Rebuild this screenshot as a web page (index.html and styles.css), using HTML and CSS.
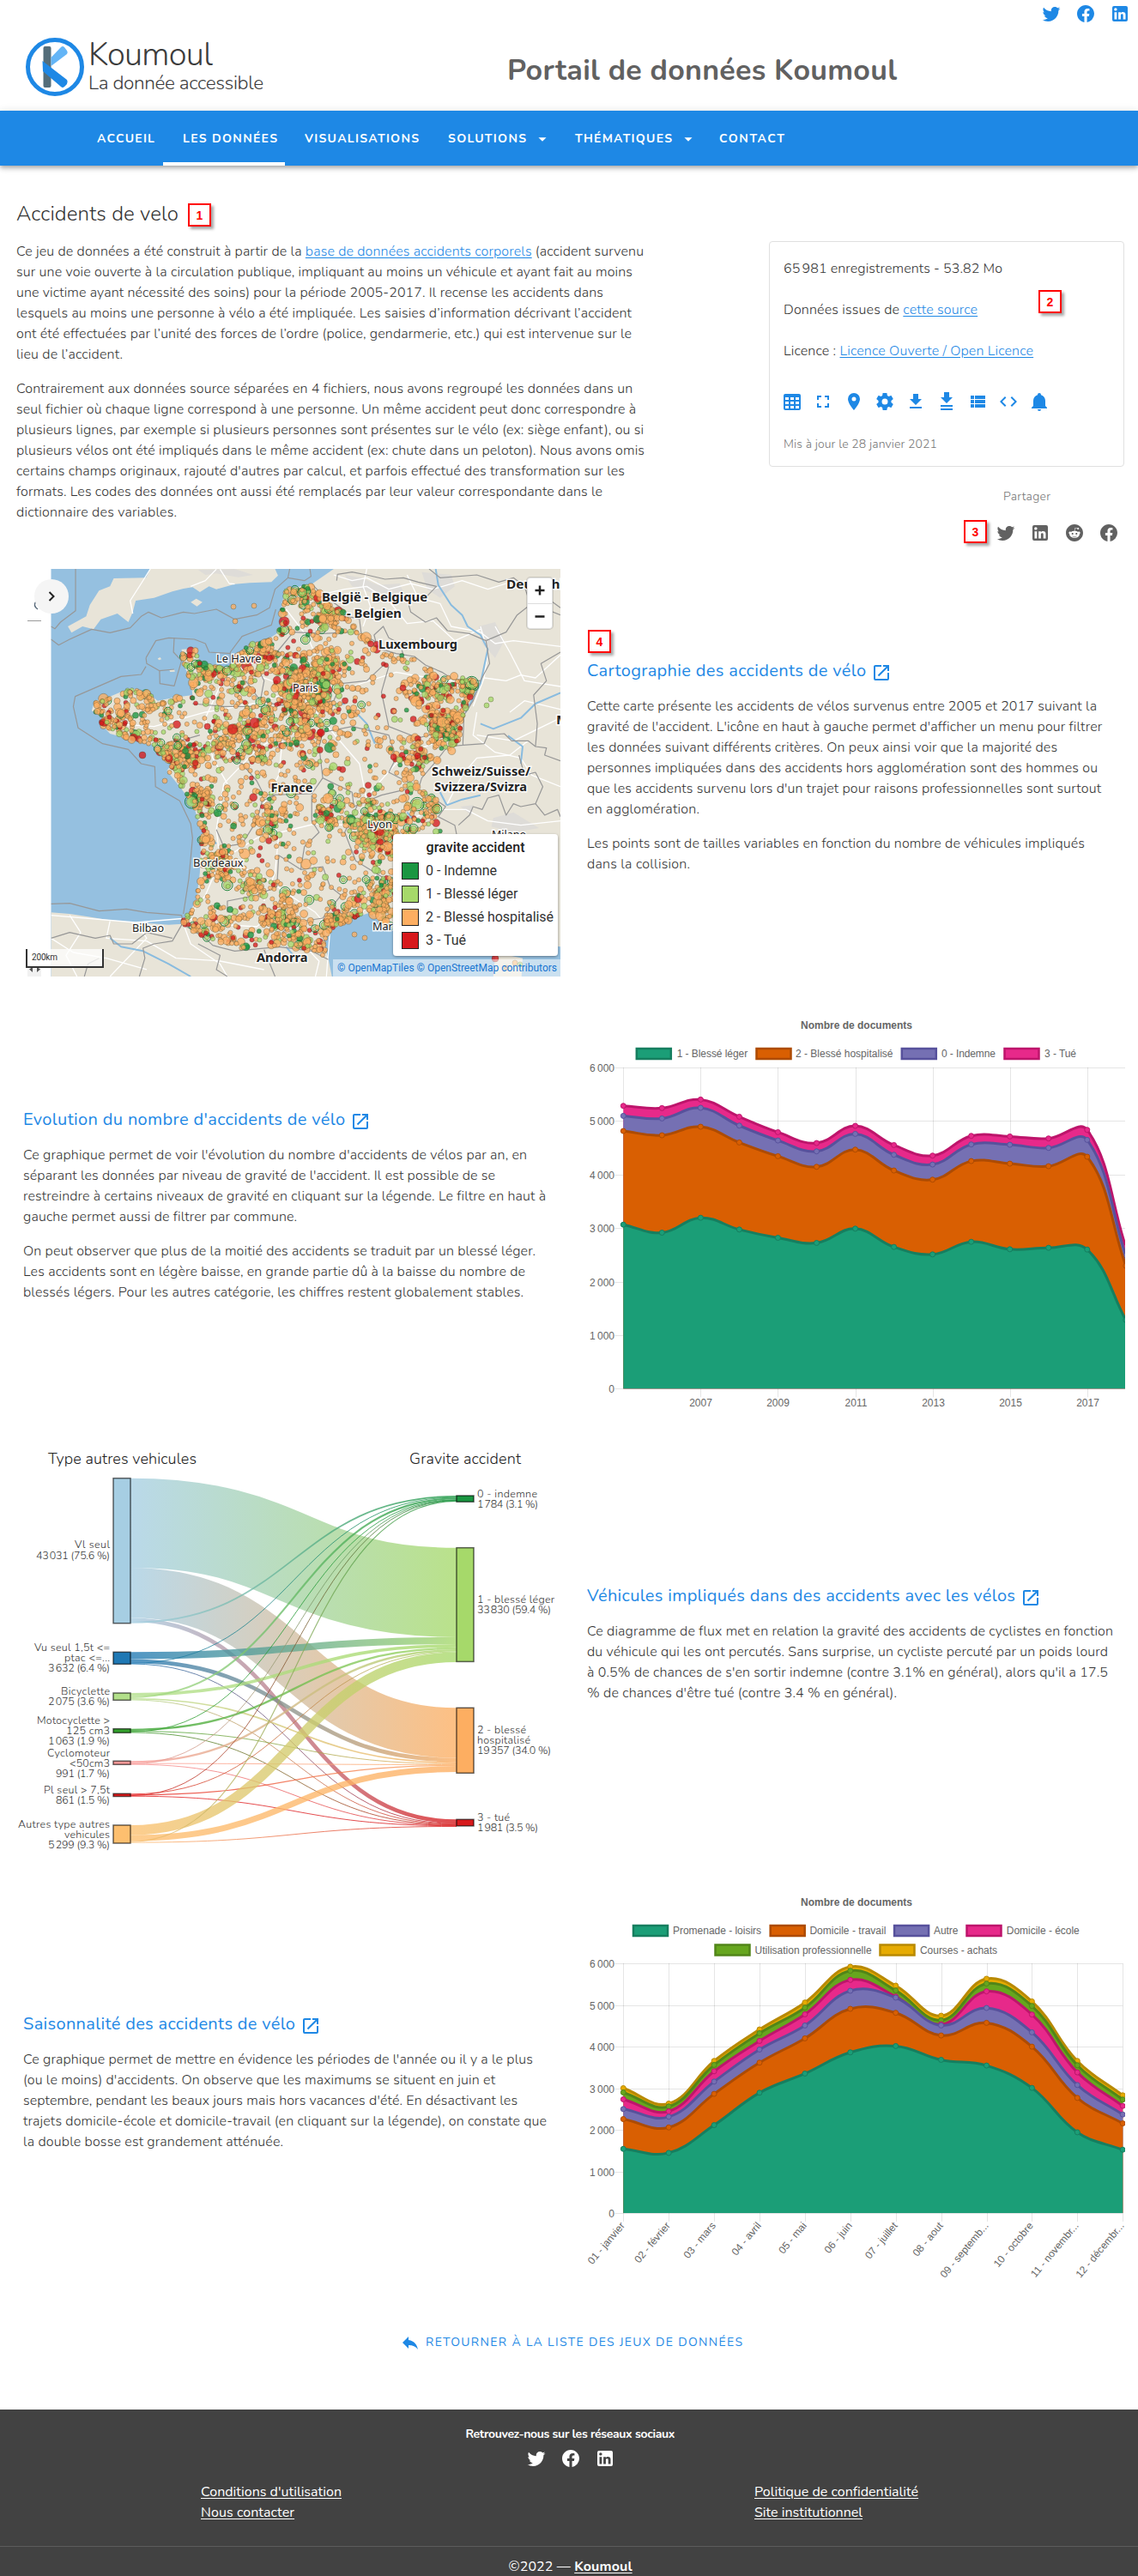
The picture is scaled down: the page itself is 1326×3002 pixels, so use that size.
FILE: index.html
```html
<!DOCTYPE html>
<html lang="fr">
<head>
<meta charset="utf-8">
<title>Accidents de velo - Koumoul</title>
<link rel="stylesheet" href="styles.css">
</head>
<body>
<svg class="sprite" aria-hidden="true">
  <symbol id="i-twitter" viewBox="0 0 24 24"><path d="M22.46,6C21.69,6.35 20.86,6.58 20,6.69C20.88,6.16 21.56,5.32 21.88,4.31C21.05,4.81 20.13,5.16 19.16,5.36C18.37,4.5 17.26,4 16,4C13.65,4 11.73,5.92 11.73,8.29C11.73,8.63 11.77,8.96 11.84,9.27C8.28,9.09 5.11,7.38 3,4.79C2.63,5.42 2.42,6.16 2.42,6.94C2.42,8.43 3.17,9.75 4.33,10.5C3.62,10.5 2.96,10.3 2.38,10V10.03C2.38,12.11 3.86,13.85 5.82,14.24C5.46,14.34 5.08,14.39 4.69,14.39C4.42,14.39 4.15,14.36 3.89,14.31C4.43,16 6,17.26 7.89,17.29C6.43,18.45 4.58,19.13 2.56,19.13C2.22,19.13 1.88,19.11 1.54,19.07C3.44,20.29 5.7,21 8.12,21C16,21 20.33,14.46 20.33,8.79C20.33,8.6 20.33,8.42 20.32,8.23C21.16,7.63 21.88,6.87 22.46,6Z"/></symbol>
  <symbol id="i-facebook" viewBox="0 0 24 24"><path d="M12 2.04C6.5 2.04 2 6.53 2 12.06C2 17.06 5.66 21.21 10.44 21.96V14.96H7.9V12.06H10.44V9.85C10.44 7.34 11.93 5.96 14.22 5.96C15.31 5.96 16.45 6.15 16.45 6.15V8.62H15.19C13.95 8.62 13.56 9.39 13.56 10.18V12.06H16.34L15.89 14.96H13.56V21.96A10 10 0 0 0 22 12.06C22 6.53 17.5 2.04 12 2.04Z"/></symbol>
  <symbol id="i-linkedin" viewBox="0 0 24 24"><path d="M19 3A2 2 0 0 1 21 5V19A2 2 0 0 1 19 21H5A2 2 0 0 1 3 19V5A2 2 0 0 1 5 3H19M18.5 18.5V13.2A3.26 3.26 0 0 0 15.24 9.94C14.39 9.94 13.4 10.46 12.92 11.24V10.13H10.13V18.5H12.92V13.57C12.92 12.8 13.54 12.17 14.31 12.17A1.4 1.4 0 0 1 15.71 13.57V18.5H18.5M6.88 8.56A1.68 1.68 0 0 0 8.56 6.88C8.56 5.95 7.81 5.19 6.88 5.19A1.69 1.69 0 0 0 5.19 6.88C5.19 7.81 5.95 8.56 6.88 8.56M8.27 18.5V10.13H5.5V18.5H8.27Z"/></symbol>
  <symbol id="i-reddit" viewBox="0 0 24 24"><path d="M14.5 15.41C14.58 15.5 14.58 15.69 14.5 15.8C13.77 16.5 12.41 16.56 12 16.56C11.61 16.56 10.25 16.5 9.54 15.8C9.44 15.69 9.44 15.5 9.54 15.41C9.65 15.31 9.82 15.31 9.92 15.41C10.38 15.87 11.33 16 12 16C12.69 16 13.66 15.87 14.1 15.41C14.21 15.31 14.38 15.31 14.5 15.41M10.75 13.04C10.75 12.47 10.28 12 9.71 12C9.14 12 8.67 12.47 8.67 13.04C8.67 13.61 9.14 14.09 9.71 14.08C10.28 14.08 10.75 13.61 10.75 13.04M14.29 12C13.72 12 13.25 12.5 13.25 13.05C13.25 13.61 13.72 14.09 14.29 14.09C14.86 14.09 15.33 13.61 15.33 13.05C15.33 12.5 14.86 12 14.29 12M22 12C22 17.5 17.5 22 12 22S2 17.5 2 12C2 6.5 6.5 2 12 2S22 6.5 22 12M18.67 12C18.67 11.19 18 10.54 17.22 10.54C16.82 10.54 16.46 10.7 16.2 10.95C15.2 10.23 13.83 9.77 12.3 9.71L12.97 6.58L15.14 7.05C15.16 7.6 15.62 8.04 16.18 8.04C16.75 8.04 17.22 7.57 17.22 7C17.22 6.43 16.75 5.96 16.18 5.96C15.77 5.96 15.41 6.2 15.25 6.55L12.82 6.03C12.75 6 12.68 6.03 12.63 6.07C12.57 6.11 12.54 6.17 12.53 6.24L11.79 9.72C10.24 9.77 8.84 10.23 7.82 10.96C7.56 10.71 7.2 10.56 6.81 10.56C6 10.56 5.35 11.21 5.35 12C5.35 12.61 5.71 13.11 6.21 13.34C6.19 13.5 6.18 13.62 6.18 13.78C6.18 16 8.79 17.85 12 17.85C15.23 17.85 17.85 16.03 17.85 13.78C17.85 13.64 17.84 13.5 17.81 13.34C18.31 13.11 18.67 12.6 18.67 12Z"/></symbol>
  <symbol id="i-table" viewBox="0 0 24 24"><path d="M4,3H20A2,2 0 0,1 22,5V20A2,2 0 0,1 20,22H4A2,2 0 0,1 2,20V5A2,2 0 0,1 4,3M4,7V10H8V7H4M10,7V10H14V7H10M20,10V7H16V10H20M4,12V15H8V12H4M4,20H8V17H4V20M10,12V15H14V12H10M10,20H14V17H10V20M20,20V17H16V20H20M20,12H16V15H20V12Z"/></symbol>
  <symbol id="i-fullscreen" viewBox="0 0 24 24"><path d="M5,5H10V7H7V10H5V5M14,5H19V10H17V7H14V5M17,14H19V19H14V17H17V14M10,17V19H5V14H7V17H10Z"/></symbol>
  <symbol id="i-marker" viewBox="0 0 24 24"><path d="M12,11.5A2.5,2.5 0 0,1 9.5,9A2.5,2.5 0 0,1 12,6.5A2.5,2.5 0 0,1 14.5,9A2.5,2.5 0 0,1 12,11.5M12,2A7,7 0 0,0 5,9C5,14.25 12,22 12,22C12,22 19,14.25 19,9A7,7 0 0,0 12,2Z"/></symbol>
  <symbol id="i-cog" viewBox="0 0 24 24"><path d="M12,15.5A3.5,3.5 0 0,1 8.5,12A3.5,3.5 0 0,1 12,8.5A3.5,3.5 0 0,1 15.5,12A3.5,3.5 0 0,1 12,15.5M19.43,12.97C19.47,12.65 19.5,12.33 19.5,12C19.5,11.67 19.47,11.34 19.43,11L21.54,9.37C21.73,9.22 21.78,8.95 21.66,8.73L19.66,5.27C19.54,5.05 19.27,4.96 19.05,5.05L16.56,6.05C16.04,5.66 15.5,5.32 14.87,5.07L14.5,2.42C14.46,2.18 14.25,2 14,2H10C9.75,2 9.54,2.18 9.5,2.42L9.13,5.07C8.5,5.32 7.96,5.66 7.44,6.05L4.95,5.05C4.73,4.96 4.46,5.05 4.34,5.27L2.34,8.73C2.21,8.95 2.27,9.22 2.46,9.37L4.57,11C4.53,11.34 4.5,11.67 4.5,12C4.5,12.33 4.53,12.65 4.57,12.97L2.46,14.63C2.27,14.78 2.21,15.05 2.34,15.27L4.34,18.73C4.46,18.95 4.73,19.03 4.95,18.95L7.44,17.94C7.96,18.34 8.5,18.68 9.13,18.93L9.5,21.58C9.54,21.82 9.75,22 10,22H14C14.25,22 14.46,21.82 14.5,21.58L14.87,18.93C15.5,18.67 16.04,18.34 16.56,17.94L19.05,18.95C19.27,19.03 19.54,18.95 19.66,18.73L21.66,15.27C21.78,15.05 21.73,14.78 21.54,14.63L19.43,12.97Z"/></symbol>
  <symbol id="i-download" viewBox="0 0 24 24"><path d="M5,20H19V18H5M19,9H15V3H9V9H5L12,16L19,9Z"/></symbol>
  <symbol id="i-download-multi" viewBox="0 0 24 24"><path d="M9,1V7H5L12,14L19,7H15V1H9M5,16V18H19V16H5M5,20V22H19V20H5Z"/></symbol>
  <symbol id="i-list" viewBox="0 0 24 24"><path d="M9,5V9H21V5M9,19H21V15H9M9,14H21V10H9M4,9H8V5H4M4,19H8V15H4M4,14H8V10H4V14Z"/></symbol>
  <symbol id="i-code" viewBox="0 0 24 24"><path d="M14.6,16.6L19.2,12L14.6,7.4L16,6L22,12L16,18L14.6,16.6M9.4,16.6L4.8,12L9.4,7.4L8,6L2,12L8,18L9.4,16.6Z"/></symbol>
  <symbol id="i-bell" viewBox="0 0 24 24"><path d="M21,19V20H3V19L5,17V11C5,7.9 7.03,5.17 10,4.29C10,4.19 10,4.1 10,4A2,2 0 0,1 12,2A2,2 0 0,1 14,4C14,4.1 14,4.19 14,4.29C16.97,5.17 19,7.9 19,11V17L21,19M14,21A2,2 0 0,1 12,23A2,2 0 0,1 10,21"/></symbol>
  <symbol id="i-open" viewBox="0 0 24 24"><path d="M14,3V5H17.59L7.76,14.83L9.17,16.24L19,6.41V10H21V3M19,19H5V5H12V3H5C3.89,3 3,3.9 3,5V19A2,2 0 0,0 5,21H19A2,2 0 0,0 21,19V12H19V19Z"/></symbol>
  <symbol id="i-reply" viewBox="0 0 24 24"><path d="M10,9V5L3,12L10,19V14.9C15,14.9 18.5,16.5 21,20C20,15 17,10 10,9Z"/></symbol>
  <symbol id="i-down" viewBox="0 0 24 24"><path d="M7,10L12,15L17,10H7Z"/></symbol>
</svg>

<header class="header">
  <div class="brand">
    <svg class="brand-mark" width="70" height="70" viewBox="0 0 70 70">
      <circle cx="35" cy="35" r="31.5" fill="#fff" stroke="#1e88e5" stroke-width="5"/>
      <rect x="21.500" y="11" width="9" height="48" rx="2" fill="#546e7a"/>
      <path d="M30.500 24 L42 12 Q44 10 46 12 L49 16 Q50.500 18 49 20 L30.500 34Z" fill="#64b5f6"/>
      <path d="M20.500 28 L49 50 Q50.500 52 49 55 L46 58 Q44 60 42 58 L21 40Z" fill="#1e88e5"/>
    </svg>
    <div class="brand-text">
      <div class="brand-name"><span data-fit="145">Koumoul</span></div>
      <div class="brand-tag"><span data-fit="204">La donnée accessible</span></div>
    </div>
  </div>
  <h1 class="site-title"><span data-fit="454">Portail de données Koumoul</span></h1>
  <div class="social social-top">
    <svg class="icon"><use href="#i-twitter"/></svg>
    <svg class="icon"><use href="#i-facebook"/></svg>
    <svg class="icon"><use href="#i-linkedin"/></svg>
  </div>
</header>

<nav class="nav">
  <a class="nav-item nav-home"><span data-fit="67">ACCUEIL</span></a>
  <a class="nav-item nav-data"><span data-fit="110">LES DONNÉES</span></a>
  <a class="nav-item nav-visu"><span data-fit="133">VISUALISATIONS</span></a>
  <a class="nav-item nav-solutions"><span data-fit="91">SOLUTIONS</span><svg class="caret"><use href="#i-down"/></svg></a>
  <a class="nav-item nav-themes"><span data-fit="113">THÉMATIQUES</span><svg class="caret"><use href="#i-down"/></svg></a>
  <a class="nav-item"><span data-fit="76">CONTACT</span></a>
</nav>

<main>
  <section class="intro">
    <div class="intro-text">
      <h2 class="page-title"><span data-fit="189">Accidents de velo</span><b class="badge">1</b></h2>
      <p>
        <span class="line"><span data-fit="731">Ce jeu de données a été construit à partir de la <a>base de données accidents corporels</a> (accident survenu</span></span>
        <span class="line"><span data-fit="718">sur une voie ouverte à la circulation publique, impliquant au moins un véhicule et ayant fait au moins</span></span>
        <span class="line"><span data-fit="684">une victime ayant nécessité des soins) pour la période 2005-2017. Il recense les accidents dans</span></span>
        <span class="line"><span data-fit="717">lesquels au moins une personne à vélo a été impliquée. Les saisies d’information décrivant l’accident</span></span>
        <span class="line"><span data-fit="717">ont été effectuées par l’unité des forces de l’ordre (police, gendarmerie, etc.) qui est intervenue sur le</span></span>
        <span class="line"><span data-fit="124">lieu de l’accident.</span></span>
      </p>
      <p>
        <span class="line"><span data-fit="718">Contrairement aux données source séparées en 4 fichiers, nous avons regroupé les données dans un</span></span>
        <span class="line"><span data-fit="722">seul fichier où chaque ligne correspond à une personne. Un même accident peut donc correspondre à</span></span>
        <span class="line"><span data-fit="731">plusieurs lignes, par exemple si plusieurs personnes sont présentes sur le vélo (ex: siège enfant), ou si</span></span>
        <span class="line"><span data-fit="732">plusieurs vélos ont été impliqués dans le même accident (ex: chute dans un peloton). Nous avons omis</span></span>
        <span class="line"><span data-fit="709">certains champs originaux, rajouté d'autres par calcul, et parfois effectué des transformation sur les</span></span>
        <span class="line"><span data-fit="683">formats. Les codes des données ont aussi été remplacés par leur valeur correspondante dans le</span></span>
        <span class="line"><span data-fit="187">dictionnaire des variables.</span></span>
      </p>
    </div>
    <aside class="side">
      <div class="card">
        <div class="card-row"><span data-fit="255">65&#8239;981 enregistrements - 53.82 Mo</span></div>
        <div class="card-row"><span data-fit="226">Données issues de <a>cette source</a></span><b class="badge badge-source">2</b></div>
        <div class="card-row"><span data-fit="291">Licence : <a>Licence Ouverte / Open Licence</a></span></div>
        <div class="actions">
          <svg class="icon"><use href="#i-table"/></svg>
          <svg class="icon"><use href="#i-fullscreen"/></svg>
          <svg class="icon"><use href="#i-marker"/></svg>
          <svg class="icon"><use href="#i-cog"/></svg>
          <svg class="icon"><use href="#i-download"/></svg>
          <svg class="icon"><use href="#i-download-multi"/></svg>
          <svg class="icon"><use href="#i-list"/></svg>
          <svg class="icon"><use href="#i-code"/></svg>
          <svg class="icon"><use href="#i-bell"/></svg>
        </div>
        <div class="updated"><span data-fit="179">Mis à jour le 28 janvier 2021</span></div>
      </div>
      <div class="share-label"><span data-fit="55">Partager</span></div>
      <div class="share">
        <b class="badge">3</b>
        <div class="social social-share">
          <svg class="icon"><use href="#i-twitter"/></svg>
          <svg class="icon"><use href="#i-linkedin"/></svg>
          <svg class="icon"><use href="#i-reddit"/></svg>
          <svg class="icon"><use href="#i-facebook"/></svg>
        </div>
      </div>
    </aside>
  </section>

  <section class="row">
    <svg class="figure" id="map" width="625" height="475" viewBox="28 663 625 475"></svg>
    <div class="story story-map">
      <b class="badge badge-map">4</b>
      <h3><span data-fit="325">Cartographie des accidents de vélo</span><svg class="icon"><use href="#i-open"/></svg></h3>
      <p>
        <span class="line"><span data-fit="594">Cette carte présente les accidents de vélos survenus entre 2005 et 2017 suivant la</span></span>
        <span class="line"><span data-fit="600">gravité de l'accident. L'icône en haut à gauche permet d'afficher un menu pour filtrer</span></span>
        <span class="line"><span data-fit="548">les données suivant différents critères. On peux ainsi voir que la majorité des</span></span>
        <span class="line"><span data-fit="595">personnes impliquées dans des accidents hors agglomération sont des hommes ou</span></span>
        <span class="line"><span data-fit="599">que les accidents survenu lors d'un trajet pour raisons professionnelles sont surtout</span></span>
        <span class="line"><span data-fit="131">en agglomération.</span></span>
      </p>
      <p>
        <span class="line"><span data-fit="580">Les points sont de tailles variables en fonction du nombre de véhicules impliqués</span></span>
        <span class="line"><span data-fit="120">dans la collision.</span></span>
      </p>
    </div>
  </section>

  <section class="row">
    <div class="story story-years">
      <h3><span data-fit="375">Evolution du nombre d'accidents de vélo</span><svg class="icon"><use href="#i-open"/></svg></h3>
      <p>
        <span class="line"><span data-fit="587">Ce graphique permet de voir l'évolution du nombre d'accidents de vélos par an, en</span></span>
        <span class="line"><span data-fit="550">séparant les données par niveau de gravité de l'accident. Il est possible de se</span></span>
        <span class="line"><span data-fit="609">restreindre à certains niveaux de gravité en cliquant sur la légende. Le filtre en haut à</span></span>
        <span class="line"><span data-fit="319">gauche permet aussi de filtrer par commune.</span></span>
      </p>
      <p>
        <span class="line"><span data-fit="597">On peut observer que plus de la moitié des accidents se traduit par un blessé léger.</span></span>
        <span class="line"><span data-fit="585">Les accidents sont en légère baisse, en grande partie dû à la baisse du nombre de</span></span>
        <span class="line"><span data-fit="583">blessés légers. Pour les autres catégorie, les chiffres restent globalement stables.</span></span>
      </p>
    </div>
    <svg class="figure chart" id="years" width="626" height="475" viewBox="685 1174 626 475"></svg>
  </section>

  <section class="row">
    <svg class="figure sankey" id="flows" width="625" height="475" viewBox="28 1685 625 475"></svg>
    <div class="story story-flows">
      <h3><span data-fit="499">Véhicules impliqués dans des accidents avec les vélos</span><svg class="icon"><use href="#i-open"/></svg></h3>
      <p>
        <span class="line"><span data-fit="613">Ce diagramme de flux met en relation la gravité des accidents de cyclistes en fonction</span></span>
        <span class="line"><span data-fit="607">du véhicule qui les ont percutés. Sans surprise, un cycliste percuté par un poids lourd</span></span>
        <span class="line"><span data-fit="607">à 0.5% de chances de s'en sortir indemne (contre 3.1% en général), alors qu'il a 17.5</span></span>
        <span class="line"><span data-fit="361">% de chances d'être tué (contre 3.4 % en général).</span></span>
      </p>
    </div>
  </section>

  <section class="row">
    <div class="story story-months">
      <h3><span data-fit="317">Saisonnalité des accidents de vélo</span><svg class="icon"><use href="#i-open"/></svg></h3>
      <p>
        <span class="line"><span data-fit="594">Ce graphique permet de mettre en évidence les périodes de l'année ou il y a le plus</span></span>
        <span class="line"><span data-fit="550">(ou le moins) d'accidents. On observe que les maximums se situent en juin et</span></span>
        <span class="line"><span data-fit="576">septembre, pendant les beaux jours mais hors vacances d'été. En désactivant les</span></span>
        <span class="line"><span data-fit="610">trajets domicile-école et domicile-travail (en cliquant sur la légende), on constate que</span></span>
        <span class="line"><span data-fit="303">la double bosse est grandement atténuée.</span></span>
      </p>
    </div>
    <svg class="figure chart" id="months" width="626" height="475" viewBox="685 2196 626 475"></svg>
  </section>

  <a class="back"><svg class="icon"><use href="#i-reply"/></svg><span data-fit="369">RETOURNER À LA LISTE DES JEUX DE DONNÉES</span></a>
</main>

<footer class="footer">
  <div class="footer-title"><span data-fit="244">Retrouvez-nous sur les réseaux sociaux</span></div>
  <div class="social">
    <svg class="icon"><use href="#i-twitter"/></svg>
    <svg class="icon"><use href="#i-facebook"/></svg>
    <svg class="icon"><use href="#i-linkedin"/></svg>
  </div>
  <div class="footer-links">
    <div><a data-fit="164">Conditions d'utilisation</a><a data-fit="109">Nous contacter</a></div>
    <div><a data-fit="191">Politique de confidentialité</a><a data-fit="126">Site institutionnel</a></div>
  </div>
  <div class="copyright"><span data-fit="144">©2022 — <a>Koumoul</a></span></div>
</footer>
<script src="main.js"></script>
</body>
</html>
```
FILE: styles.css
```css
* { box-sizing: border-box; }
body {
  margin: 0;
  background: #fff;
  color: #333;
  font-family: Nunito, Lato, sans-serif;
  font-size: 16px;
  font-weight: 300;
  line-height: 24px;
}
h1, h2, h3, p { margin: 0; font-weight: 300; }
a { color: #1e88e5; text-decoration: underline; text-underline-offset: 2px; }
.sprite { position: absolute; width: 0; height: 0; }
.icon { width: 24px; height: 24px; fill: currentColor; display: block; flex: none; }
[data-fit] { white-space: nowrap; display: inline-block; }
.line { display: block; height: 24px; }

.badge {
  display: block;
  flex: none;
  width: 27px;
  height: 27px;
  border: 2px solid #f00;
  background: #fff;
  box-shadow: 3px 3px 3px rgba(0, 0, 0, .35);
  color: #f00;
  font: bold 14px/24px "Liberation Sans", sans-serif;
  text-align: center;
}

/* header */
.header { display: flex; height: 129px; position: relative; }
.brand { display: flex; padding: 43px 0 0 29px; gap: 4px; width: 591px; }
.brand-text { color: #3c3c3c; padding-top: 3px; }
.brand-name { font-size: 38px; line-height: 36px; height: 37px; }
.brand-tag { font-size: 22.5px; line-height: 28px; height: 28px; }
.site-title { font-size: 34px; font-weight: 700; line-height: 40px; color: #616161; padding-top: 62px; }
.social { display: flex; justify-content: center; gap: 16px; }
.social-top { margin-left: auto; padding: 4px 9px 0 0; color: #1e88e5; }

.nav {
  display: flex;
  height: 64px;
  padding-left: 113px;
  background: #1e88e5;
  box-shadow: 0 2px 4px -1px rgba(0, 0, 0, .2), 0 4px 5px rgba(0, 0, 0, .14), 0 1px 10px rgba(0, 0, 0, .12);
}
.nav-item {
  display: flex;
  align-items: center;
  color: #fff;
  font-weight: 700;
  font-size: 14px;
  text-decoration: none;
  position: relative;
  height: 64px;
  padding-top: 1px;
}
.nav-home { width: 100px; }
.nav-data { width: 142px; }
.nav-data::after { content: ""; position: absolute; left: -23px; bottom: 0; width: 142px; height: 4px; background: #fff; }
.nav-visu { width: 167px; }
.nav-solutions { width: 148px; }
.nav-themes { width: 168px; }
.caret { width: 22px; height: 22px; fill: currentColor; margin-left: 8px; }

/* dataset description */
.intro { display: flex; justify-content: space-between; height: 470px; padding: 40px 16px 0 19px; }
.page-title { display: flex; gap: 11px; font-size: 24px; line-height: 32px; height: 48px; }
.page-title .badge { margin-top: 4px; }
.intro-text p + p { margin-top: 16px; }
.side { width: 414px; padding-top: 48px; }
.card { border: 1px solid #e0e0e0; border-radius: 4px; height: 263px; padding: 15px 16px; }
.card-row { height: 48px; line-height: 32px; position: relative; }
.badge-source { position: absolute; left: 297px; top: -7px; }
.actions { display: flex; gap: 12px; padding-top: 15px; margin-left: -2px; color: #1e88e5; }
.updated { color: #757575; font-size: 14px; padding-top: 28px; line-height: 20px; }
.share-label { color: #757575; font-size: 14px; line-height: 20px; padding: 25px 0 0 273px; }
.share { display: flex; padding: 17px 0 0 227px; gap: 10px; }
.social-share { color: #616161; padding-top: 3px; }

/* visualisation rows */
.row { display: grid; grid-template-columns: 625px 625px; column-gap: 32px; height: 475px; margin: 0 0 36px 28px; }
.figure { display: block; }
.story { position: relative; margin-left: -1px; }
.story h3 { display: flex; gap: 6px; height: 45px; color: #1e88e5; font-size: 20px; font-weight: 400; line-height: 32px; }
.story h3 .icon { margin-top: 6px; }
.story p + p { margin-top: 16px; }
.story-map { padding-top: 103px; }
.story-years { padding-top: 115px; }
.story-flows { padding-top: 159px; }
.story-months { padding-top: 147px; }
.badge-map { position: absolute; left: 1px; top: 71px; }
.chart text { font: 12px "Liberation Sans", Arial, sans-serif; fill: #666; }
.chart .title { font-weight: 700; }
.sankey { overflow: visible; }
.sankey text { font-size: 12.500px; fill: #333; }
.sankey .head { font-size: 18px; fill: #222; }
.map-label { font: 700 15px "Noto Sans", sans-serif; fill: #222; stroke: #fff; stroke-width: 3px; stroke-opacity: .85; paint-order: stroke; }
.map-town { font: 13px "Noto Sans", sans-serif; fill: #222; stroke: #fff; stroke-width: 3px; stroke-opacity: .85; paint-order: stroke; }
.map-ui { font: 16px Roboto, sans-serif; fill: #333; }
.map-ui-title { font: 500 16px Roboto, sans-serif; fill: #222; }
.map-credit { font: 12px Roboto, sans-serif; fill: #1976d2; }
.map-scale { font: 10px Roboto, sans-serif; fill: #333; }

.back { display: flex; gap: 6px; justify-content: flex-start; height: 101px; padding: 11px 0 0 466px; color: #1e88e5; font-size: 14px; font-weight: 400; text-decoration: none; }

/* footer */
.footer { height: 194px; background: #424242; color: #fff; padding: 20px 0 0 3px; font-weight: 400; }
.footer a { color: #fff; }
.footer-title { text-align: center; font-size: 14px; font-weight: 700; line-height: 16px; height: 25px; padding-top: 1px; }
.footer-links { display: grid; grid-template-columns: 645px 1fr; padding: 15px 0 0 231px; height: 90px; }
.footer-links div { display: flex; flex-direction: column; align-items: flex-start; }
.copyright { border-top: 1px solid #5c5c5c; text-align: center; padding: 11px 0 0 3px; margin-left: -3px; }
.copyright a { font-weight: 700; }
```
FILE: main.js
```js
const NS = 'http://www.w3.org/2000/svg';

function add(parent, tag, attrs, text) {
  const el = document.createElementNS(NS, tag);
  for (const k in attrs) el.setAttribute(k, attrs[k]);
  if (text !== undefined) el.textContent = text;
  parent.appendChild(el);
  return el;
}

/* Spread the glyphs of a line over its measure. */
document.querySelectorAll('[data-fit]').forEach(el => {
  const gap = (Number(el.dataset.fit) - el.getBoundingClientRect().width) / (el.textContent.length - 1);
  el.style.letterSpacing = gap.toFixed(3) + 'px';
  el.style.marginRight = (-gap).toFixed(3) + 'px';
});

/* ---------- stacked area charts ---------- */
const SERIES = [
  ['#1b9e77', '#167e5f'], ['#d95f02', '#ad4b02'], ['#7570b3', '#57519c'],
  ['#e7298a', '#bd156b'], ['#66a61e', '#518518'], ['#e6ab02', '#b88902']
];

function smooth(pts, top, bottom) {
  const cp = pts.map((p, i) => {
    const a = pts[i - 1] || p, b = pts[i + 1] || p;
    const d1 = Math.hypot(p[0] - a[0], p[1] - a[1]), d2 = Math.hypot(b[0] - p[0], b[1] - p[1]);
    const f1 = 0.4 * d1 / (d1 + d2), f2 = 0.4 * d2 / (d1 + d2);
    const cap = y => Math.max(top, Math.min(bottom, y));
    return [p[0] - f1 * (b[0] - a[0]), cap(p[1] - f1 * (b[1] - a[1])), p[0] + f2 * (b[0] - a[0]), cap(p[1] + f2 * (b[1] - a[1]))];
  });
  let d = `M${pts[0]}`;
  for (let i = 1; i < pts.length; i++) d += `C${cp[i - 1][2]},${cp[i - 1][3]} ${cp[i][0]},${cp[i][1]} ${pts[i]}`;
  return d;
}

function chart(id, o) {
  const svg = document.getElementById(id);
  const X = i => o.x0 + i * o.step, Y = v => o.bottom - v * (o.bottom - o.top) / 6000;
  const right = Math.min(X(o.data[0].length - 1), 1311);
  const grid = { stroke: '#000', 'stroke-opacity': 0.1, 'stroke-width': 1 };
  for (let v = 0; v <= 6000; v += 1000) {
    const y = Math.round(Y(v)) + 0.5;
    add(svg, 'line', { x1: o.x0 - 10, x2: right, y1: y, y2: y, ...grid });
    add(svg, 'text', { x: 716, y: y + 4, 'text-anchor': 'end', textLength: v ? 29 : 6.5 }, v ? v / 1000 + '\u202f000' : '0');
  }
  o.ticks.forEach(([i, label]) => {
    const x = Math.round(X(i)) + 0.5;
    add(svg, 'line', { x1: x, x2: x, y1: o.top, y2: o.bottom + (i || o.rotate ? 10 : 0), ...grid });
    if (!label) return;
    if (o.rotate) add(svg, 'text', { transform: `translate(${x + 2},${o.bottom + 15}) rotate(-50)`, 'text-anchor': 'end' }, label);
    else add(svg, 'text', { x, y: o.bottom + 21, 'text-anchor': 'middle' }, label);
  });
  for (let s = o.data.length - 1; s >= 0; s--) {
    const pts = o.data[s].map((v, i) => [X(i), Y(v)]);
    const d = smooth(pts, o.top, o.bottom);
    add(svg, 'path', { d: `${d}V${o.bottom}H${o.x0}Z`, fill: SERIES[s][0] });
    add(svg, 'path', { d, fill: 'none', stroke: SERIES[s][1], 'stroke-width': 3 });
    pts.forEach(p => add(svg, 'circle', { cx: p[0], cy: p[1], r: 3, fill: SERIES[s][0], stroke: SERIES[s][1] }));
  }
  add(svg, 'text', { class: 'title', x: 998, y: o.titleY, 'text-anchor': 'middle' }, 'Nombre de documents');
  o.legend.forEach(([x, y, tx, label, w], s) => {
    add(svg, 'rect', { x: x + 1.5, y: y - 6, width: 40, height: 12, fill: SERIES[s][0], stroke: SERIES[s][1], 'stroke-width': 2.5 });
    add(svg, 'text', { x: tx, y: y + 4, textLength: w }, label);
  });
}

chart('years', {
  x0: 726.3, step: 45.04, top: 1244, bottom: 1618.3, titleY: 1199,
  ticks: [[0, ''], [2, '2007'], [4, '2009'], [6, '2011'], [8, '2013'], [10, '2015'], [12, '2017']],
  legend: [[740.3, 1228, 788.7, '1 - Blessé léger', 82.5], [880, 1228, 927, '2 - Blessé hospitalisé', 113.5], [1049.3, 1228, 1097, '0 - Indemne', 63], [1169, 1228, 1217, '3 - Tué', 37]],
  data: [
    [3064, 2914, 3192, 2973, 2818, 2722, 2989, 2647, 2508, 2743, 2604, 2631, 2599, 1283],
    [4813, 4733, 4893, 4599, 4342, 4144, 4465, 4075, 3904, 4251, 4203, 4155, 4332, 2294],
    [5096, 5048, 5246, 4914, 4636, 4433, 4759, 4369, 4187, 4562, 4556, 4497, 4647, 2487],
    [5283, 5241, 5401, 5080, 4791, 4588, 4909, 4551, 4353, 4722, 4711, 4674, 4834, 2647]
  ]
});

chart('months', {
  x0: 726.3, step: 52.9, top: 2288, bottom: 2579, titleY: 2221, rotate: true,
  ticks: ['01 - janvier', '02 - février', '03 - mars', '04 - avril', '05 - mai', '06 - juin', '07 - juillet', '08 - aout', '09 - septemb...', '10 - octobre', '11 - novembr...', '12 - décembr...'].map((t, i) => [i, t]),
  legend: [[736.5, 2250, 784, 'Promenade - loisirs', 103], [896.2, 2250, 943.4, 'Domicile - travail', 89], [1040.6, 2250, 1088, 'Autre', 28.5], [1125, 2250, 1172.8, 'Domicile - école', 85], [832, 2272.5, 879.6, 'Utilisation professionnelle', 136], [1024, 2272.5, 1072, 'Courses - achats', 90]],
  data: [
    [1541, 1445, 2112, 2890, 3351, 3860, 4012, 3681, 3544, 3007, 1940, 1521],
    [2257, 2057, 2863, 3613, 4197, 4906, 4810, 4266, 4569, 3998, 2766, 2154],
    [2498, 2312, 3158, 3929, 4507, 5340, 5175, 4507, 4927, 4342, 3076, 2367],
    [2732, 2443, 3406, 4135, 4775, 5601, 5202, 4534, 5326, 4769, 3379, 2573],
    [2897, 2560, 3558, 4321, 4934, 5821, 5347, 4631, 5512, 4975, 3551, 2725],
    [3000, 2629, 3654, 4411, 5058, 5918, 5464, 4741, 5629, 5085, 3654, 2828]
  ]
});

/* ---------- flow diagram ---------- */
(function () {
  const svg = document.getElementById('flows');
  const left = [
    { y: 1722.7, h: 169, c: '#a6cee3', f: { L: 104.2, H: 58.3, T: 4.7, I: 1.8 }, t: [['Vl seul', 1804, 41], ['43 031 (75.6 %)', 1817, 86]] },
    { y: 1925.3, h: 14, c: '#1f78b4', f: { L: 8.2, H: 4.7, I: 0.5, T: 0.6 }, t: [['Vu seul 1,5t <=', 1924, 88], ['ptac <=...', 1936, 53], ['3 632 (6.4 %)', 1948, 72]] },
    { y: 1973, h: 8.3, c: '#b2df8a', f: { L: 3.7, I: 2.2, H: 1.7, T: 0.7 }, t: [['Bicyclette', 1975, 57], ['2 075 (3.6 %)', 1987, 72]] },
    { y: 2014.7, h: 4.6, c: '#33a02c', f: { L: 2.3, H: 1, I: 0.6, T: 0.7 }, t: [['Motocyclette >', 2009, 85], ['125 cm3', 2021, 51], ['1 063 (1.9 %)', 2033, 72]] },
    { y: 2052.3, h: 4, c: '#fb9a99', f: { L: 2.4, H: 0.9, I: 0.3, T: 0.4 }, t: [['Cyclomoteur', 2047, 73], ['<50cm3', 2059, 47], ['991 (1.7 %)', 2071, 63]] },
    { y: 2090.3, h: 3.2, c: '#e31a1c', f: { L: 1, H: 1.2, I: 0.4, T: 0.6 }, t: [['Pl seul > 7,5t', 2090, 77], ['861 (1.5 %)', 2102, 63]] },
    { y: 2127, h: 21, c: '#fdbf6f', f: { L: 11.5, H: 7, I: 1.2, T: 0.9 }, t: [['Autres type autres', 2130, 107], ['vehicules', 2142, 53], ['5 299 (9.3 %)', 2154, 72]] }
  ];
  const right = {
    I: { y: 1743, h: 7.2, c: '#1a9641', t: [['0 - indemne', 1744.5, 70], ['1 784 (3.1 %)', 1757, 71]] },
    L: { y: 1803.7, h: 132.7, c: '#a6d96a', t: [['1 - blessé léger', 1867.5, 90], ['33 830 (59.4 %)', 1880, 86]] },
    H: { y: 1990.3, h: 76, c: '#fdae61', t: [['2 - blessé', 2020, 57], ['hospitalisé', 2032, 62], ['19 357 (34.0 %)', 2044, 86]] },
    T: { y: 2120.3, h: 7.6, c: '#d7191c', t: [['3 - tué', 2122, 38], ['1 981 (3.5 %)', 2134, 71]] }
  };
  const thin = s => s.replace(/(\d) (\d)/, '$1\u202f$2');
  const defs = add(svg, 'defs', {});
  left.forEach((n, i) => {
    for (const k in right) {
      const g = add(defs, 'linearGradient', { id: `g${i}${k}`, gradientUnits: 'userSpaceOnUse', x1: 152, x2: 532, y1: 0, y2: 0 });
      add(g, 'stop', { offset: 0, 'stop-color': n.c });
      add(g, 'stop', { offset: 1, 'stop-color': right[k].c });
    }
  });
  const used = { I: 0, L: 0, H: 0, T: 0 };
  left.forEach((n, i) => {
    let sy = n.y;
    for (const k in n.f) {
      const w = n.f[k], y1 = sy + w / 2, y2 = right[k].y + used[k] + w / 2;
      add(svg, 'path', { d: `M152,${y1}C342,${y1} 342,${y2} 532,${y2 + 0.01}`, fill: 'none', stroke: `url(#g${i}${k})`, 'stroke-width': Math.max(1, w), 'stroke-opacity': 0.78 });
      sy += w;
      used[k] += w;
    }
  });
  const node = { width: 20, stroke: '#000', 'stroke-opacity': 0.6, 'stroke-width': 1.5 };
  left.forEach(n => {
    add(svg, 'rect', { x: 132, y: n.y, height: n.h, fill: n.c, ...node });
    n.t.forEach(([s, y, w]) => add(svg, 'text', { x: 128, y, 'text-anchor': 'end', textLength: w }, thin(s)));
  });
  Object.values(right).forEach(n => {
    add(svg, 'rect', { x: 532, y: n.y, height: n.h, fill: n.c, ...node });
    n.t.forEach(([s, y, w]) => add(svg, 'text', { x: 556, y, textLength: w }, thin(s)));
  });
  add(svg, 'text', { class: 'head', x: 56, y: 1706, textLength: 173 }, 'Type autres vehicules');
  add(svg, 'text', { class: 'head', x: 477, y: 1706, textLength: 130 }, 'Gravite accident');
})();

/* ---------- accident map ---------- */
(function () {
  const svg = document.getElementById('map');
  const defs = add(svg, 'defs', {});
  const clip = add(defs, 'clipPath', { id: 'mapclip' });
  add(clip, 'rect', { x: 59.5, y: 663, width: 594, height: 475 });
  const f = add(defs, 'filter', { id: 'lift', x: '-20%', y: '-20%', width: '140%', height: '140%' });
  add(f, 'feDropShadow', { dx: 0, dy: 1, stdDeviation: 1.5, 'flood-opacity': 0.4 });
  const view = add(svg, 'g', { 'clip-path': 'url(#mapclip)' });
  add(view, 'rect', { x: 59, y: 663, width: 595, height: 475, fill: '#95c0e0' });
  const geo = add(view, 'g', { transform: 'translate(0,650) scale(.42735,.33333)' });
  const shape = (d, a) => add(geo, 'path', { d, fill: 'none', 'vector-effect': 'non-scaling-stroke', 'stroke-linejoin': 'round', ...a });

  const land = { fill: '#e8e4d8' };
  shape('M410,39L398,70L310,72L300,100L270,115L245,165L235,205L185,240L195,262L225,240L255,250L275,215L320,195L350,225L362,190L370,150L420,140L470,118L500,108L525,103L545,120L570,100L590,110L640,92L680,88L740,85L758,62L750,39Z', land);
  shape('M520,155L535,143L552,155L537,170Z M430,352L437,348L440,355L433,358Z M462,392L475,390L477,398L464,399Z', land);
  const coastN = [[850, 92], [780, 110], [768, 160], [770, 230], [755, 265], [725, 290], [680, 305], [640, 345], [640, 375], [600, 385], [545, 370], [535, 318], [495, 320], [503, 380], [520, 430], [525, 480], [470, 490], [430, 500], [400, 470], [355, 455], [300, 485], [258, 500], [250, 535], [290, 560], [270, 575], [300, 615], [370, 640], [420, 655], [445, 700], [470, 720], [455, 745], [490, 800], [525, 860], [545, 930], [560, 965], [548, 980], [545, 1100], [535, 1200], [510, 1250], [497, 1280]];
  const coastS = [[905, 1464], [895, 1400], [882, 1340], [905, 1300], [960, 1262], [1010, 1240], [1040, 1280], [1100, 1310]];
  shape('M910,39L' + coastN.join('L') + 'L460,1283L370,1275L290,1265L240,1255L190,1245L139,1240V1464L' + coastS.join('L') + 'L1330,1330L1528,1360V39Z', land);
  shape('M1350,1392L1395,1392L1425,1400L1422,1464L1345,1464Z', land);

  // built-up areas
  const town = { fill: '#dedcd8' };
  shape('M540,42L640,39L690,60L650,68L590,55L560,60Z M940,60L985,70L1030,95L1090,90L1100,120L1020,125L960,100Z M1150,50L1230,60L1240,100L1200,140L1165,110Z M1305,240L1350,225L1375,290L1350,350L1315,300Z M1345,910L1400,890L1470,945L1400,960L1340,940Z M1255,870L1290,865L1285,900Z', town);

  // roads
  const road = { stroke: '#fff', 'stroke-width': 1.3 };
  ['M410,39L385,90L355,150L362,195', 'M590,40L560,80L520,100', 'M600,40L625,90L640,92', 'M910,60L960,80L1000,70L1060,110L1120,90L1180,110L1260,80L1330,110L1380,90', 'M1000,39L990,100L1010,170L990,240', 'M870,130L940,110L1000,100L1060,150L1110,230L1180,220L1240,290L1310,250', 'M1110,60L1140,140L1200,160L1230,240L1310,260L1350,300L1400,290L1528,310', 'M1310,240L1330,330L1320,420L1290,520', 'M1350,240L1390,330L1430,430L1528,450', 'M1320,420L1380,430L1420,410L1460,420L1528,340', 'M1300,540L1290,620L1350,680L1420,700L1450,760L1528,800', 'M1220,860L1260,760L1300,700L1390,690L1440,640', 'M1195,880L1270,880L1330,920L1420,935L1528,920', 'M1300,620L1400,640L1528,560', 'M1390,540L1430,500L1528,530',
   'M820,460L740,430L640,380', 'M820,460L880,400L840,280L780,180', 'M820,460L960,450L1080,400L1170,420L1290,440', 'M820,460L690,510L560,540L420,590L300,580', 'M820,480L800,590L700,670L610,790L590,950L600,1060', 'M600,1060L560,1180L510,1260L370,1275L139,1250', 'M600,1060L700,1100L790,1180L860,1240L900,1300L890,1464', 'M830,490L900,600L980,720L1000,850L1040,940', 'M1040,940L1040,1040L1020,1130L990,1240', 'M1040,940L1100,920L1190,880', 'M770,640L760,760L720,860L760,970L750,1100L720,1200', 'M600,1060L700,980L860,930L1040,940', 'M1010,820L1100,690L1180,650L1260,580', 'M620,1140L630,1000', 'M510,1260L580,1280L700,1290L790,1190',
   'M139,1330L200,1380L290,1400L400,1440', 'M190,1250L220,1310L180,1390L210,1464', 'M370,1275L400,1330L340,1410L300,1464', 'M500,1280L520,1350L600,1420L620,1464', 'M300,1270L290,1330L400,1340L480,1400L600,1410L720,1440', 'M840,1370L870,1410L860,1464', 'M610,420L560,560L580,700L620,790'].forEach(d => shape(d, road));

  // rivers and lakes
  const water = { stroke: '#88bbdf', 'stroke-width': 2 };
  ['M1188,39L1195,95L1230,165L1260,200L1275,240L1310,270L1330,320L1310,440L1270,540', 'M1310,580L1345,598L1420,560L1460,510L1528,472', 'M1385,622L1425,660L1420,720', 'M1218,865L1260,845L1310,830M1218,865L1200,820', 'M300,1330L330,1360L390,1375L460,1420L520,1464', 'M970,540L1000,580L1022,650', 'M560,960L590,1000', 'M1110,890L1130,920', 'M890,520L940,510', 'M1010,1240L1030,1200', 'M780,1360L800,1390'].forEach(d => shape(d, water));

  // administrative limits
  const limit = { stroke: '#979797', 'stroke-width': 1.2 };
  ['M206,39V185L165,225L150,248L139,240', 'M139,285L160,305L190,285L250,250L300,262L355,245L385,205L405,190L440,210L500,190L530,195L590,180L640,215L700,200L735,175L750,110L785,70L790,39', 'M785,70L830,80L848,65L845,39', 'M628,375V330L660,275L700,255L740,235L752,180', 'M398,350L425,290L460,280L530,285L560,300L570,330L630,335', 'M475,280L473,330L495,360L475,448L436,440L435,395L400,370L398,350', 'M435,395L475,390', 'M398,380L385,408L330,415L205,485L200,520L213,595L280,650L350,670L385,720L422,730L424,800L490,850L520,930L525,980L515,1120L500,1245', 'M139,1210L190,1208L270,1235L345,1228L400,1240L495,1250L500,1280',
   'M850,92L880,130L935,180L950,205L980,215L985,265L1020,290L1040,320L1080,335L1130,345L1160,375L1205,400L1235,425L1310,430L1290,500L1265,550L1262,655L1220,660L1190,710L1150,770L1140,810L1175,835L1215,870L1195,905L1240,935L1250,1000',
   'M1310,430L1335,370L1325,290L1280,265L1220,255L1190,210L1160,225L1120,190L1110,145L1160,140L1190,100L1140,85L1100,70L1050,75L1000,60L960,50L920,58L918,80', 'M1030,320L1020,270L1045,240L1060,280L1090,300L1100,340', 'M1325,290L1380,260L1410,200L1450,160L1528,200', 'M1170,39L1200,70L1300,60L1360,85L1400,70L1430,100L1440,140L1480,130L1528,175', 'M1262,655L1320,650L1330,620L1375,615L1395,640L1440,640L1460,660L1490,665L1485,690L1528,710', 'M1460,660L1465,580L1455,480L1490,430L1475,370L1528,330', 'M1250,935L1280,900L1290,870L1315,880L1330,840L1360,830L1380,900L1400,860L1420,870L1460,860L1480,800L1460,750L1430,760L1415,690', 'M1460,860L1485,900L1520,880L1528,905',
   'M670,430L710,500L760,515L850,515L910,500L930,440L1000,430L1050,370', 'M525,510L610,520L690,520', 'M690,520L670,600L600,700L660,720L700,780L720,830L850,825L880,770L960,820L965,870L1040,830L1140,800', 'M710,500L720,430L700,380L755,330L800,260L880,265L960,260', 'M545,620L490,640L455,690', 'M590,950L610,1010L660,1000L700,920L715,850L750,830', 'M850,830L850,920L870,960L830,1010L820,1090L760,1040L755,1150L700,1180L620,1200L620,1240', 'M820,1090L880,1080L900,1150L930,1180L880,1260L800,1275L770,1310', 'M880,770L870,660L880,610L960,590L1060,620L1080,700L1060,750L1120,790', 'M1060,380L1040,470L1060,590L1140,630L1200,610', 'M980,850L940,960L970,1060L1060,1130',
   'M497,1280L560,1330L580,1355L640,1375L760,1360L850,1375L895,1405', 'M497,1280L470,1340L420,1350L390,1365L395,1400L380,1464', 'M139,1330L190,1310L260,1330L300,1320L310,1350L360,1350L400,1310L470,1330', 'M540,1350L600,1390L590,1440L620,1464', 'M720,1370L750,1464', 'M230,1464L240,1420L270,1400'].forEach(d => shape(d, limit));

  // one circle per accident, clustered around towns and along the coast
  const france = [...coastN].reverse().concat([[900, 165], [935, 185], [978, 262], [1020, 290], [1040, 322], [1130, 350], [1205, 405], [1310, 432], [1272, 520], [1255, 590], [1262, 655], [1195, 705], [1150, 780], [1140, 810], [1198, 845], [1195, 905], [1230, 1000], [1200, 1290], [1060, 1290], [1010, 1240], [960, 1262], [905, 1300], [882, 1340], [895, 1400], [840, 1372], [760, 1355], [650, 1365], [560, 1330]]);
  const inside = (x, y) => {
    let r = false;
    for (let i = 0, j = france.length - 1; i < france.length; j = i++) {
      const [xi, yi] = france[i], [xj, yj] = france[j];
      if (yi > y !== yj > y && x < (xj - xi) * (y - yi) / (yj - yi) + xi) r = !r;
    }
    return r;
  };
  let seed = 4217;
  const rnd = () => (seed = (seed * 16807) % 2147483647) / 2147483647;
  const near = s => (rnd() + rnd() + rnd() - 1.5) * s;
  const towns = [[832, 470, 95, 330], [890, 190, 60, 110], [1215, 590, 45, 170], [1030, 940, 75, 200], [1160, 880, 60, 60], [1040, 1190, 80, 130], [640, 390, 80, 100], [550, 840, 40, 60], [600, 1070, 45, 80], [320, 590, 60, 60], [400, 500, 90, 100], [510, 690, 50, 80], [600, 660, 50, 50], [700, 680, 50, 50], [660, 590, 70, 60], [760, 1250, 65, 100], [600, 1310, 60, 70], [830, 1330, 60, 40], [920, 1270, 45, 80], [1140, 470, 50, 40], [1280, 450, 30, 50], [900, 370, 45, 50], [850, 640, 90, 40], [560, 390, 30, 40], [730, 330, 50, 50], [1130, 690, 50, 50], [740, 920, 50, 50], [900, 900, 40, 50], [690, 1150, 50, 40], [1000, 960, 30, 60], [460, 690, 40, 50], [820, 130, 50, 60], [770, 560, 60, 40], [1200, 470, 50, 50]];
  const spots = [];
  for (let i = 0; i < 1900; i++) spots.push([240 + rnd() * 1060, 90 + rnd() * 1300]);
  towns.forEach(([x, y, s, n]) => { for (let i = 0; i < n; i++) spots.push([x + near(s), y + near(s * 1.28)]); });
  france.forEach(([x, y], i) => {
    const [nx, ny] = france[(i + 1) % france.length];
    if (x > 900 && y > 690 && y < 1250) return;
    for (let k = 0; k < 10; k++) { const t = k / 10; spots.push([x + (nx - x) * t + near(18), y + (ny - y) * t + near(22)]); }
  });
  const dots = add(view, 'g', { stroke: '#3a3a1a', 'stroke-opacity': 0.5, 'stroke-width': 0.6, 'fill-opacity': 0.78 });
  spots.forEach(([x, y]) => {
    if (!inside(x, y)) return;
    const k = rnd(), z = rnd();
    const fill = k < 0.66 ? '#fdae61' : k < 0.84 ? '#a6d96a' : k < 0.94 ? '#d7191c' : '#1a9641';
    const r = z < 0.7 ? 2.6 : z < 0.9 ? 3.6 : z < 0.985 ? 4.5 : 6;
    const cx = (x * 0.42735).toFixed(1), cy = (650 + y / 3).toFixed(1);
    add(dots, 'circle', { cx, cy, r, fill });
    if (k > 0.7 && k < 0.74) add(dots, 'circle', { cx, cy, r: r + 1.8, fill: 'none', stroke: '#0c7a2e', 'stroke-opacity': 0.9, 'stroke-width': 1 });
  });
  [[272, 707, 0], [296, 706, 0], [274, 724, 0], [166, 880, 1], [192, 910, 0], [572, 815, 2], [567, 822, 2], [413, 1089, 0], [425, 1093, 0], [577, 1117, 1], [600, 1122, 0], [590, 1128, 0], [606, 1124, 2]].forEach(([cx, cy, c]) =>
    add(dots, 'circle', { cx, cy, r: c === 1 ? 4 : 3, fill: ['#fdae61', '#d7191c', '#a6d96a'][c] }));

  const label = (cls, x, y, w, s) => add(view, 'text', { class: cls, x, y, textLength: w, lengthAdjust: 'spacingAndGlyphs' }, s);
  label('map-label', 375, 701, 123, 'België - Belgique');
  label('map-label', 404, 720, 64, '- Belgien');
  label('map-label', 441, 755.5, 92, 'Luxembourg');
  label('map-label', 590, 685.500, 96, 'Deutschland');
  label('map-label', 315.5, 923, 49, 'France');
  label('map-label', 503, 904, 115, 'Schweiz/Suisse/');
  label('map-label', 506, 922, 108, 'Svizzera/Svizra');
  label('map-label', 299, 1121, 59.5, 'Andorra');
  label('map-label', 648, 844, 60, 'Munich');
  label('map-town', 252, 772, 52.5, 'Le Havre');
  label('map-town', 341, 806, 29.500, 'Paris');
  label('map-town', 428, 965, 29, 'Lyon');
  label('map-town', 225, 1010, 58.5, 'Bordeaux');
  label('map-town', 154, 1086, 37, 'Bilbao');
  label('map-town', 434, 1084, 54, 'Marseille');
  label('map-town', 573, 977, 40, 'Milano');

  // zoom control
  add(svg, 'rect', { x: 614, y: 673, width: 30, height: 60, rx: 4, fill: '#fff', stroke: '#000', 'stroke-opacity': 0.12, 'stroke-width': 2 });
  add(svg, 'path', { d: 'M614,703.5H644', stroke: '#ddd' });
  add(svg, 'path', { d: 'M623.500,688H634.500M629,682.500V693.500M623.500,718.500H634.500', stroke: '#222', 'stroke-width': 2.5 });

  // attribution
  add(svg, 'rect', { x: 388, y: 1118, width: 265.500, height: 20, fill: '#fff', 'fill-opacity': 0.5 });
  add(svg, 'text', { class: 'map-credit', x: 393, y: 1132, textLength: 256 }, '© OpenMapTiles © OpenStreetMap contributors');

  // legend
  add(svg, 'rect', { x: 458, y: 972, width: 192, height: 142, rx: 4, fill: '#fff', filter: 'url(#lift)' });
  add(svg, 'text', { class: 'map-ui-title', x: 496.5, y: 992.5, textLength: 115 }, 'gravite accident');
  [['#1a9641', '0 - Indemne', 83], ['#a6d96a', '1 - Blessé léger', 107.5], ['#fdae61', '2 - Blessé hospitalisé', 149], ['#d7191c', '3 - Tué', 47]].forEach(([c, s, w], i) => {
    add(svg, 'rect', { x: 468.5, y: 1005.500 + i * 27, width: 19, height: 19, fill: c, stroke: '#222' });
    add(svg, 'text', { class: 'map-ui', x: 496, y: 1020 + i * 27, textLength: w }, s);
  });

  // scale bar and drawer handle
  add(svg, 'rect', { x: 32, y: 1129, width: 16, height: 9, fill: '#f1f1f1' });
  add(svg, 'path', { d: 'M38,1127V1133L34,1129.500ZM43,1127V1133L47,1129.500Z', fill: '#555' });
  add(svg, 'rect', { x: 30.500, y: 1106, width: 90, height: 21, fill: '#fff', 'fill-opacity': 0.75 });
  add(svg, 'path', { d: 'M31,1106V1127H120V1106', fill: 'none', stroke: '#333', 'stroke-width': 2 });
  add(svg, 'text', { class: 'map-scale', x: 37, y: 1119, textLength: 30 }, '200km');
  add(svg, 'path', { d: 'M32,723.5H48', stroke: '#999' });
  add(svg, 'path', { d: 'M42,701Q38,706 44,710', fill: 'none', stroke: '#567', 'stroke-width': 1.5 });
  add(svg, 'circle', { cx: 60, cy: 695, r: 20, fill: '#f5f5f5' });
  add(svg, 'path', { d: 'M57.500,690L62.500,695L57.500,700', fill: 'none', stroke: '#222', 'stroke-width': 2 });
})();
```
